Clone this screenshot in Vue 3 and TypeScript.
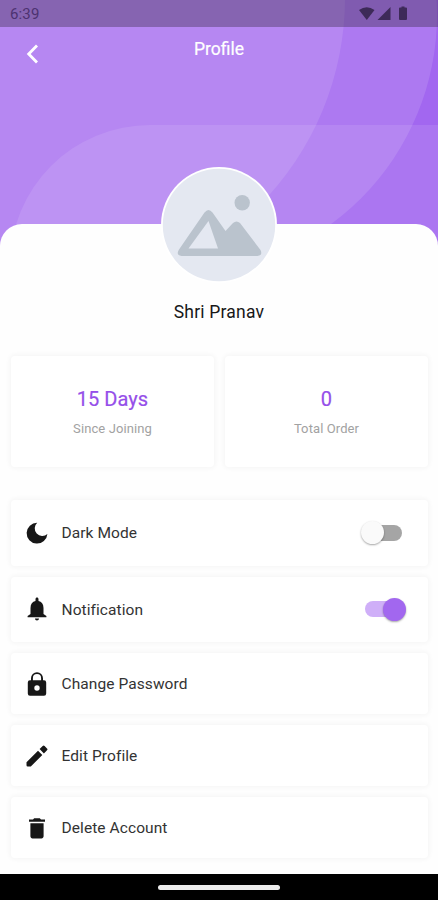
<script setup lang="ts">
import { ref } from 'vue'

interface Stat {
  value: string
  label: string
}

interface MenuItem {
  label: string
  icon: string
  size: 'tall' | 'short'
  toggle?: 'dark' | 'notify'
}

const stats: Stat[] = [
  { value: '15 Days', label: 'Since Joining' },
  { value: '0', label: 'Total Order' },
]

const items: MenuItem[] = [
  {
    label: 'Dark Mode',
    size: 'tall',
    toggle: 'dark',
    icon: 'M12.200 1.800A10.400 10.400 0 1 0 22.400 13 6.800 6.800 0 0 1 12.200 1.800z',
  },
  {
    label: 'Notification',
    size: 'tall',
    toggle: 'notify',
    icon: 'M12 23.6c1.1 0 2-.9 2-2h-4c0 1.100.89 2 2 2zm6.500-6.500v-6.200c0-3.500-1.900-6.100-5-6.800V2.500C13.500 1.200 12.830.600 12 .600s-1.500.600-1.500 1.900v1.600C7.400 4.800 5.500 7.400 5.500 10.900v6.200L2.600 19v1.300h18.800V19z',
  },
  {
    label: 'Change Password',
    size: 'short',
    icon: 'M19 8.200h-1V6.200A6 6 0 0 0 6 6.200v2H5a2.200 2.200 0 0 0-2.200 2.200v11.200A2.200 2.200 0 0 0 5 23.800h14a2.200 2.200 0 0 0 2.200-2.200V10.400A2.200 2.200 0 0 0 19 8.200zM7.900 6.200a4.100 4.100 0 0 1 8.200 0v2H7.900zM12 18.700a2.700 2.700 0 1 1 0-5.400 2.700 2.700 0 0 1 0 5.400z',
  },
  {
    label: 'Edit Profile',
    size: 'short',
    icon: 'M1.500 18.200V21.300Q1.500 22.500 2.700 22.500H5.800L17.300 11 13 6.700zM22 6.300a1.300 1.300 0 0 0 0-1.900L19.600 2a1.300 1.300 0 0 0-1.900 0L14.600 5.100l4.300 4.300z',
  },
  {
    label: 'Delete Account',
    size: 'short',
    icon: 'M5.400 20.200c0 1.200.9 2.200 2.100 2.200h9c1.200 0 2.100-1 2.100-2.200V7.200H5.400zM20 3.600h-4l-1.200-1.400H9.200L8 3.600H4v2.200h16z',
  },
]

const toggles = ref({ dark: false, notify: true })

function flip(key: 'dark' | 'notify') {
  toggles.value[key] = !toggles.value[key]
}
</script>

<template>
  <div class="screen">
    <header class="hero">
      <svg class="hero-art" viewBox="0 0 438 250" aria-hidden="true">
        <rect width="438" height="250" fill="#a267f0" />
        <path d="M0-244H178A259 259 0 0 1 178 274H0z" fill="#fff" fill-opacity=".12" />
        <circle cx="51" cy="-2" r="294" fill="#fff" fill-opacity=".11" />
        <rect x="10" y="125" width="700" height="280" rx="140" fill="#fff" fill-opacity=".1" />
      </svg>
      <div class="status">
        <span class="clock">6:39</span>
        <svg class="signals" width="52" height="16" viewBox="0 0 52 16" aria-hidden="true">
          <path d="M1 4Q8.700-1.500 16.500 4L8.800 14z" />
          <path d="M32.500 1v13H19.500z" />
          <path d="M42 1.500h1.500V.500h3v1H48q1 0 1 1V13q0 1-1 1h-6q-1 0-1-1V2.500q0-1 1-1z" />
        </svg>
      </div>
      <div class="appbar">
        <svg class="back" width="14" height="20" viewBox="0 0 14 20" aria-label="Back">
          <path d="M12 1.500 3.700 10l8.300 8.500" />
        </svg>
        <h1>Profile</h1>
      </div>
    </header>

    <main class="sheet">
      <svg class="avatar" width="116" height="116" viewBox="0 0 116 116" aria-hidden="true">
        <circle cx="58" cy="58" r="58" fill="#fff" />
        <circle cx="58" cy="58" r="56.200" fill="#e4e8f1" />
        <circle cx="81.200" cy="35.700" r="7.700" fill="#bac3cd" />
        <path
          d="M18 82.500 43.500 45.500q4-5 8 0L64.500 64l7.500-8q3.500-3 7 0L99.500 83q2.500 5.500-3 6H20.500q-6-.800-2.500-6.500z"
          fill="#bac3cd"
        />
        <path d="M47.500 54 27.500 81.500H57z" fill="#e4e8f1" />
      </svg>
      <p class="name">Shri Pranav</p>

      <section class="stats">
        <div v-for="s in stats" :key="s.label" class="card stat">
          <strong>{{ s.value }}</strong>
          <span>{{ s.label }}</span>
        </div>
      </section>

      <section class="menu">
        <div v-for="item in items" :key="item.label" class="card row" :class="item.size">
          <svg class="icon" viewBox="0 0 24 24" aria-hidden="true">
            <path :d="item.icon" fill-rule="evenodd" />
          </svg>
          <span class="label">{{ item.label }}</span>
          <button
            v-if="item.toggle"
            class="switch"
            :class="{ on: toggles[item.toggle] }"
            :aria-label="item.label"
            @click="flip(item.toggle)"
          >
            <i class="thumb"></i>
          </button>
        </div>
      </section>
    </main>

    <footer class="navbar"><i class="pill"></i></footer>
  </div>
</template>

<style>
body {
  margin: 0;
}
</style>

<style scoped>
.screen {
  display: flex;
  flex-direction: column;
  height: 900px;
  overflow: hidden;
  background: #fefefe;
  font-family: Roboto, 'Liberation Sans', sans-serif;
}

.hero {
  position: relative;
  flex: none;
  height: 250px;
}

.hero-art {
  position: absolute;
  inset: 0;
  width: 100%;
  height: 100%;
}

.status {
  position: relative;
  display: flex;
  align-items: center;
  justify-content: space-between;
  box-sizing: border-box;
  height: 27px;
  padding: 1px 28px 0 10px;
  background: rgba(50, 40, 60, 0.36);
}

.clock {
  color: #4d3270;
  font-size: 15px;
  letter-spacing: 0.15px;
}

.signals {
  fill: #3d2a58;
}

.appbar {
  position: relative;
  display: grid;
  grid-template-columns: 50px 1fr 50px;
  align-items: center;
  height: 44px;
}

.back {
  margin: 10px 0 0 25px;
  fill: none;
  stroke: #fff;
  stroke-width: 2.8;
}

h1 {
  margin: 0;
  color: #fff;
  font-size: 17.5px;
  font-weight: 400;
  text-align: center;
  letter-spacing: 0;
  -webkit-text-stroke: 0.2px #fff;
}

.sheet {
  position: relative;
  display: flex;
  flex: 1;
  flex-direction: column;
  align-items: center;
  margin-top: -26.5px;
  border-radius: 22px 22px 0 0;
  background: #fefefe;
}

.avatar {
  flex: none;
  margin-top: -56.500px;
}

.name {
  margin: 17px 0 0;
  color: #181818;
  font-size: 17.5px;
  font-weight: 400;
  line-height: 24px;
  letter-spacing: 0.2px;
}

.card {
  box-sizing: border-box;
  border-radius: 4px;
  background: #fff;
  box-shadow: 0 0 4px 2px rgba(0, 0, 0, 0.03);
}

.stats,
.menu {
  box-sizing: border-box;
  width: 100%;
  padding: 0 10px 0 11px;
}

.stats {
  display: grid;
  grid-template-columns: 1fr 1fr;
  gap: 11px;
  margin-top: 32px;
}

.stat {
  display: flex;
  flex-direction: column;
  align-items: center;
  height: 111px;
  padding-top: 31px;
}

.stat strong {
  color: #954ee9;
  font-size: 20px;
  font-weight: 400;
  line-height: 24px;
  letter-spacing: 0.05px;
  -webkit-text-stroke: 0.2px #954ee9;
}

.stat span {
  margin-top: 9px;
  color: #a2a2a2;
  font-size: 13px;
  line-height: 18px;
  letter-spacing: 0.1px;
}

.menu {
  display: flex;
  flex-direction: column;
  gap: 11px;
  margin-top: 33px;
}

.row {
  display: flex;
  align-items: center;
  padding: 0 24px 0 13.5px;
}

.tall {
  height: 65.500px;
}

.short {
  height: 61px;
}

.icon {
  width: 24px;
  height: 24px;
  margin-right: 13px;
  fill: #171717;
}

.label {
  flex: 1;
  padding-top: 1px;
  color: #333;
  font-size: 15.5px;
  letter-spacing: 0.08px;
}

.switch {
  position: relative;
  width: 34px;
  height: 16px;
  margin-right: 2.5px;
  padding: 0;
  border: 0;
  border-radius: 8px;
  background: #a5a5a5;
}

.switch.on {
  margin-right: 5px;
  background: #cfaff8;
}

.thumb {
  position: absolute;
  top: -3.5px;
  left: -7px;
  width: 23px;
  height: 23px;
  border-radius: 50%;
  background: #fafafa;
  box-shadow: 0 1px 2px rgba(0, 0, 0, 0.35);
}

.on .thumb {
  left: 17.5px;
  background: #a267ef;
}

.navbar {
  position: relative;
  display: flex;
  flex: none;
  align-items: center;
  justify-content: center;
  height: 26px;
  background: #000;
}

.pill {
  width: 122px;
  height: 5px;
  border-radius: 2.5px;
  background: #ececec;
}
</style>
